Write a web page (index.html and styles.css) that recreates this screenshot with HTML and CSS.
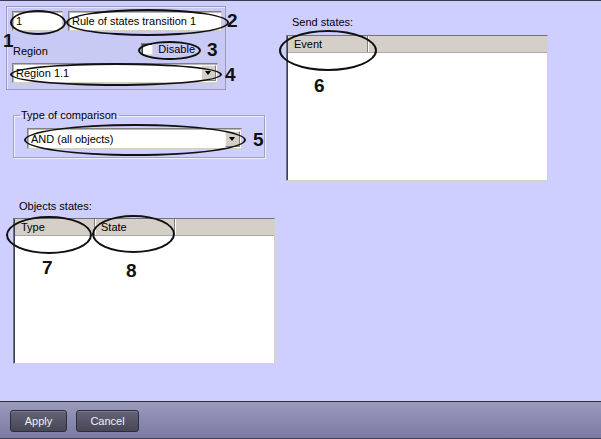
FILE: index.html
```html
<!DOCTYPE html>
<html lang="en">
<head>
    <meta charset="UTF-8">
    <title>Rule of states transition</title>
    <link rel="stylesheet" href="styles.css">
</head>
<body>
<div class="window">
    <div class="content">
        <div class="col-left">
            <div class="rule-panel">
                <div class="panel-row">
                    <div class="field field-id">1</div>
                    <div class="field field-name">Rule of states transition 1</div>
                </div>
                <div class="panel-row row-region">
                    <span class="label">Region</span>
                    <span class="check-wrap"><span class="checkbox"></span>Disable</span>
                </div>
                <div class="combo combo-region">
                    <span class="combo-value">Region 1.1</span>
                    <span class="combo-arrow"></span>
                </div>
            </div>

            <fieldset class="group">
                <legend>Type of comparison</legend>
                <div class="combo combo-type">
                    <span class="combo-value">AND (all objects)</span>
                    <span class="combo-arrow"></span>
                </div>
            </fieldset>

            <div class="list-label label-objects">Objects states:</div>
            <div class="listview">
                <div class="list-head">
                    <span class="col col-type">Type</span>
                    <span class="col col-state">State</span>
                </div>
            </div>
        </div>

        <div class="col-right">
            <div class="list-label label-send">Send states:</div>
            <div class="listview">
                <div class="list-head">
                    <span class="col col-event">Event</span>
                </div>
            </div>
        </div>
    </div>

    <div class="footer">
        <button class="btn btn-apply">Apply</button>
        <button class="btn btn-cancel">Cancel</button>
    </div>

    <!-- annotations -->
    <span class="mark mark-1"></span>
    <span class="mark mark-2"></span>
    <span class="mark mark-3"></span>
    <span class="mark mark-4"></span>
    <span class="mark mark-5"></span>
    <span class="mark mark-6"></span>
    <span class="mark mark-7"></span>
    <span class="mark mark-8"></span>

    <span class="num num-1">1</span>
    <span class="num num-2">2</span>
    <span class="num num-3">3</span>
    <span class="num num-4">4</span>
    <span class="num num-5">5</span>
    <span class="num num-6">6</span>
    <span class="num num-7">7</span>
    <span class="num num-8">8</span>
</div>
</body>
</html>
```

FILE: styles.css
```css
body {
    margin: 0;
    padding: 0;
    font-family: "Liberation Sans", Arial, sans-serif;
    font-size: 11px;
    color: #000;
}
.window {
    position: relative;
    width: 601px;
    height: 439px;
    box-sizing: border-box;
    background-color: #cfcfff;
    border-top: 1px solid #3c3c4c;
    display: flex;
    flex-direction: column;
    overflow: hidden;
}
.content {
    flex: 1;
    display: flex;
}
.col-left {
    width: 280px;
    padding: 5px 0 0 6px;
    box-sizing: border-box;
}
.col-right {
    padding: 15px 0 0 6px;
}

/* top panel */
.rule-panel {
    width: 220px;
    height: 84px;
    box-sizing: border-box;
    background-color: #c9c9f5;
    border: 1px solid #9a9abc;
    box-shadow: inset 1px 1px 0 #e4e4ff;
    padding: 4px 0 0 5px;
}
.panel-row {
    display: flex;
    gap: 5px;
}
.field {
    height: 20px;
    box-sizing: border-box;
    background: #fff;
    border: 1px solid;
    border-color: #808080 #d4d0c8 #d4d0c8 #808080;
    box-shadow: inset 1px 1px 0 #b8b8b8;
    padding: 0 0 0 3px;
    line-height: 18px;
    white-space: nowrap;
}
.field-id {
    width: 51px;
}
.field-name {
    width: 154px;
}
.row-region {
    height: 32px;
    align-items: center;
    justify-content: space-between;
    width: 183px;
    padding-top: 4px;
    box-sizing: border-box;
}
.label {
    padding: 4px 0 0 1px;
}
.check-wrap {
    display: flex;
    align-items: center;
    gap: 5px;
}
.checkbox {
    width: 12px;
    height: 12px;
    box-sizing: border-box;
    background: #fff;
    border: 1px solid;
    border-color: #808080 #e0e0e0 #e0e0e0 #808080;
    box-shadow: inset 1px 1px 0 #404040;
}

/* combo boxes */
.combo {
    display: flex;
    align-items: center;
    justify-content: space-between;
    box-sizing: border-box;
    background: #fff;
    border: 1px solid;
    border-color: #808080 #d4d0c8 #d4d0c8 #808080;
    box-shadow: inset 1px 1px 0 #b8b8b8;
    padding: 0 1px 0 3px;
}
.combo-region {
    width: 206px;
    height: 20px;
}
.combo-type {
    width: 215px;
    height: 21px;
    margin: 6px 0 0 13px;
}
.combo-arrow {
    position: relative;
    width: 15px;
    height: 16px;
    box-sizing: border-box;
    background: #d4d0c8;
    border: 1px solid;
    border-color: #f4f4f4 #808080 #808080 #f4f4f4;
}
.combo-arrow::after {
    content: "";
    position: absolute;
    left: 3px;
    top: 5px;
    border-left: 3px solid transparent;
    border-right: 3px solid transparent;
    border-top: 4px solid #000;
}

/* group box */
.group {
    width: 252px;
    height: 49px;
    box-sizing: border-box;
    margin: 19px 0 0 7px;
    padding: 0;
    border: 1px solid #a2a2bc;
    box-shadow: inset 1px 1px 0 #eeeeff, 1px 1px 0 #eeeeff;
}
.group legend {
    margin-left: 6px;
    padding: 0 2px 0 1px;
    line-height: 13px;
}

/* lists */
.list-label {
    line-height: 13px;
    padding-left: 6px;
}
.label-objects {
    margin: 42px 0 0 7px;
}
.label-objects + .listview {
    margin-left: 7px;
    margin-top: 5px;
}
.label-send + .listview {
    margin-top: 6px;
}
.listview {
    width: 262px;
    height: 146px;
    box-sizing: border-box;
    background: #fff;
    border: 1px solid;
    border-color: #707080 #d4d0c8 #d4d0c8 #707080;
    box-shadow: inset 1px 1px 0 #404050;
}
.list-head {
    display: flex;
    height: 17px;
    margin-left: 1px;
    background: #d4d0c8;
    border-bottom: 1px solid #a8a8a8;
    box-sizing: border-box;
}
.col {
    padding-left: 6px;
    line-height: 16px;
    box-sizing: border-box;
    border-right: 1px solid #808080;
    box-shadow: 1px 0 0 #fff;
}
.col-type {
    width: 80px;
}
.col-state {
    width: 80px;
}
.col-event {
    width: 80px;
}

/* footer */
.footer {
    height: 38px;
    box-sizing: border-box;
    border-top: 1px solid #303040;
    border-bottom: 1px solid #404050;
    background: linear-gradient(#9a9aba, #7a7aa4);
    display: flex;
    align-items: flex-start;
    gap: 9px;
    padding: 8px 0 0 10px;
}
.btn {
    height: 22px;
    border: 1px solid #2c2c3a;
    border-radius: 3px;
    background: linear-gradient(#636376, #474758);
    color: #f0f0f8;
    font-family: "Liberation Sans", Arial, sans-serif;
    font-size: 11px;
    padding: 0;
    box-shadow: inset 0 1px 0 #7a7a8e;
}
.btn-apply {
    width: 57px;
}
.btn-cancel {
    width: 63px;
}

/* annotation ellipses */
.mark {
    position: absolute;
    box-sizing: border-box;
    border: 2.5px solid #111;
    border-radius: 50%;
}
.mark-1 { left: 10px; top: 9px; width: 56px; height: 25px; }
.mark-2 { left: 66px; top: 8px; width: 163px; height: 27px; }
.mark-3 { left: 138px; top: 40px; width: 63px; height: 19px; }
.mark-4 { left: 10px; top: 62px; width: 212px; height: 23px; }
.mark-5 { left: 24px; top: 123px; width: 222px; height: 32px; }
.mark-6 { left: 279px; top: 29px; width: 98px; height: 41px; }
.mark-7 { left: 6px; top: 215px; width: 86px; height: 38px; }
.mark-8 { left: 92px; top: 214px; width: 83px; height: 38px; }

.num {
    position: absolute;
    font-family: "Liberation Sans", Arial, sans-serif;
    font-weight: bold;
    font-size: 19px;
    line-height: 19px;
    color: #111;
}
.num-1 { left: 3px; top: 30px; }
.num-2 { left: 227px; top: 10px; }
.num-3 { left: 207px; top: 39px; }
.num-4 { left: 225px; top: 64px; }
.num-5 { left: 253px; top: 129px; }
.num-6 { left: 314px; top: 75px; }
.num-7 { left: 42px; top: 257px; }
.num-8 { left: 126px; top: 260px; }
```
